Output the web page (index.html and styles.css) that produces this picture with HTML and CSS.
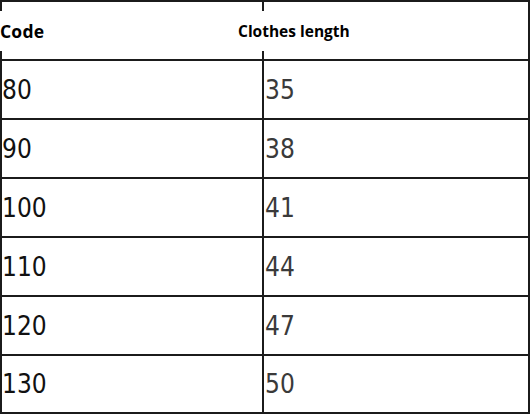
FILE: index.html
```html
<!DOCTYPE html>
<html>
<head>
<meta charset="utf-8">
<link rel="stylesheet" href="styles.css">
</head>
<body>
<div class="table">
  <div class="cell head left"><span class="label code">Code</span></div>
  <div class="cell head right"><span class="label len">Clothes length</span></div>
  <div class="cell left">80</div><div class="cell right">35</div>
  <div class="cell left">90</div><div class="cell right">38</div>
  <div class="cell left">100</div><div class="cell right">41</div>
  <div class="cell left">110</div><div class="cell right">44</div>
  <div class="cell left">120</div><div class="cell right">47</div>
  <div class="cell left last">130</div><div class="cell right last">50</div>
</div>
</body>
</html>
```
FILE: styles.css
```css
html, body {
  margin: 0;
  padding: 0;
  background: #ffffff;
}
.table {
  width: 530px;
  height: 414px;
  box-sizing: border-box;
  border: 2px solid #1b1b1b;
  display: grid;
  grid-template-columns: 262px 1fr;
  grid-template-rows: repeat(6, 59px) 56px;
}
.cell {
  display: flex;
  align-items: center;
  border-bottom: 2px solid #1b1b1b;
  font-family: "DejaVu Sans Condensed", "DejaVu Sans", sans-serif;
  font-stretch: semi-condensed;
  font-size: 26px;
  color: #111111;
  white-space: nowrap;
}
.cell.last {
  border-bottom: none;
}
.cell.left {
  border-right: 2px solid #1b1b1b;
  padding-left: 0;
}
.cell.right {
  color: #3a3a3a;
  padding-left: 1px;
}
.label {
  display: block;
  background: #ffffff;
  font-family: "Open Sans", "Liberation Sans", sans-serif;
  font-stretch: normal;
  font-weight: 700;
  font-size: 15.5px;
  line-height: 20px;
  padding: 10px 0;
  color: #000000;
}
.label.code {
  margin-left: -2px;
  padding-right: 14px;
  font-size: 17.5px;
  letter-spacing: 0.2px;
}
.label.len {
  margin-left: -27px;
  padding-right: 10px;
}
```
